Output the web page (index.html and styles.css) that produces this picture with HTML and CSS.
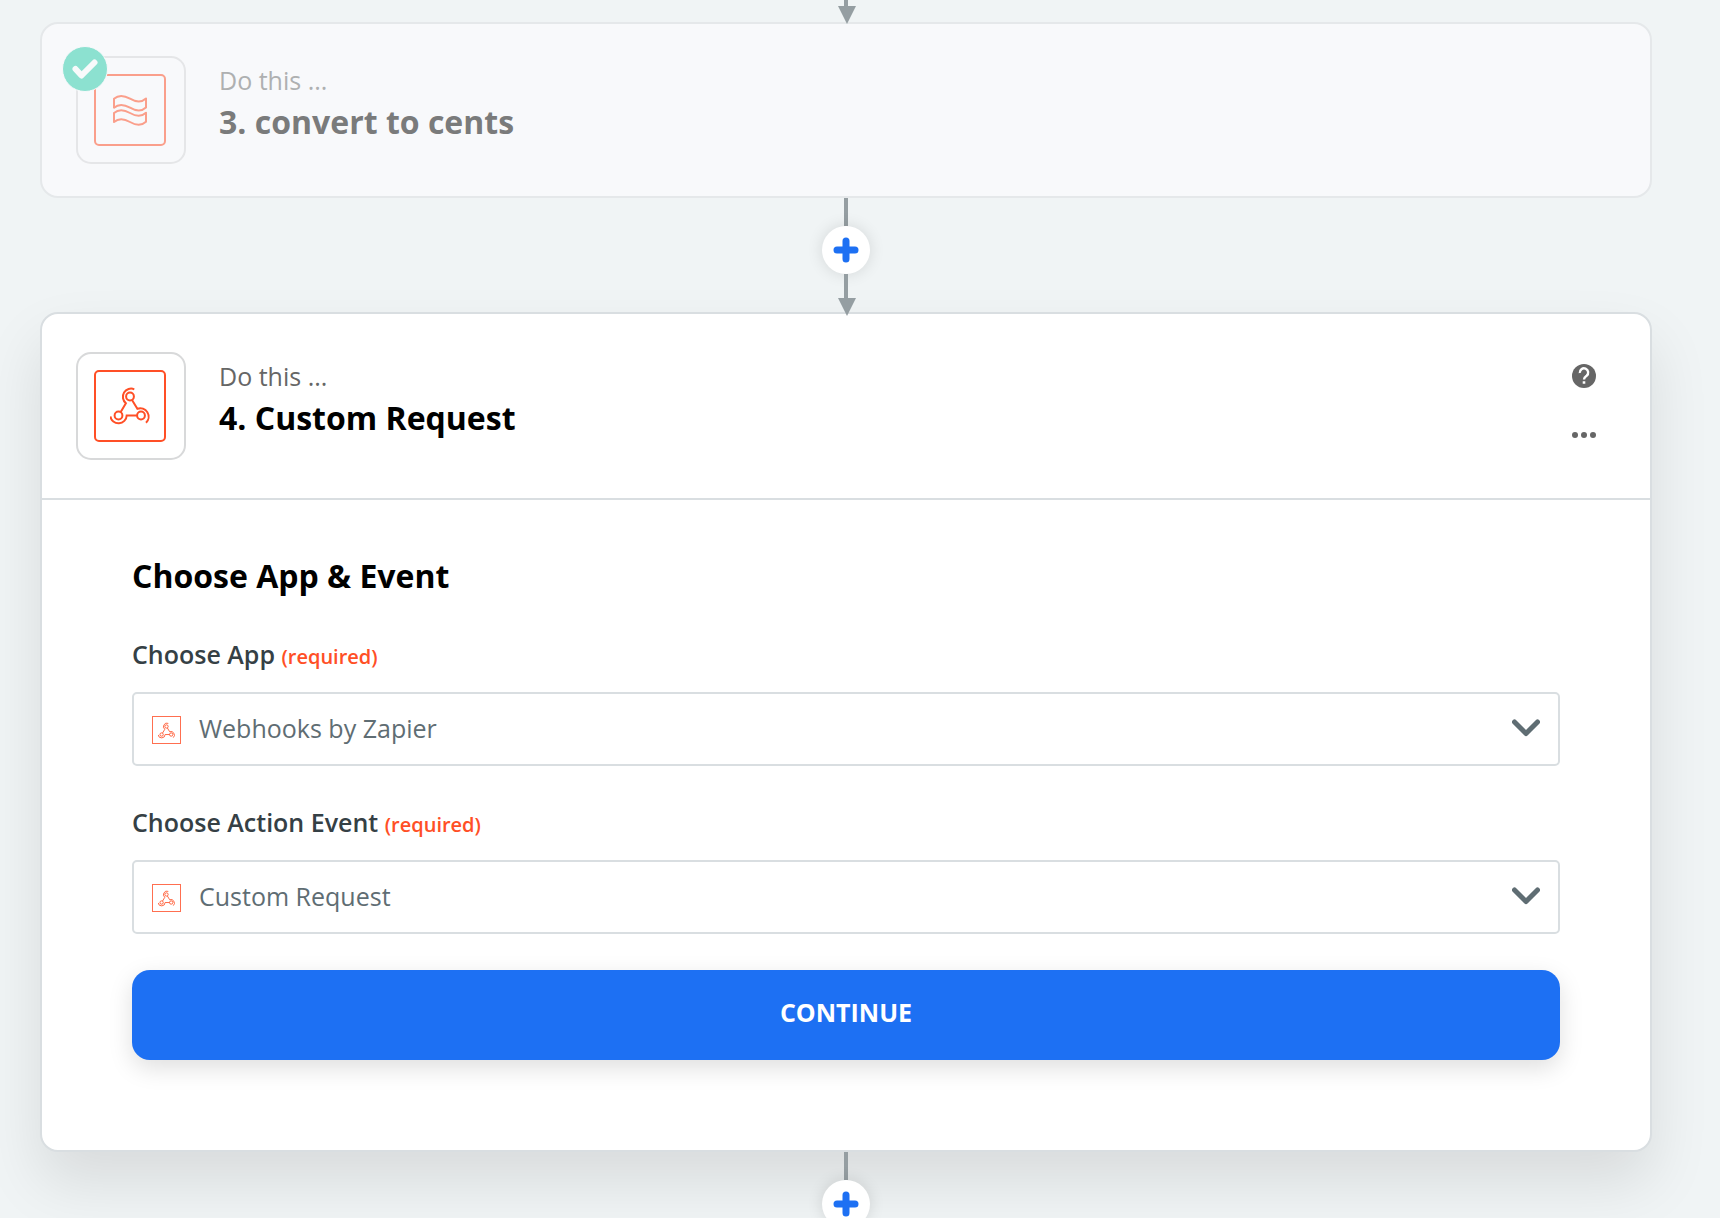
FILE: index.html
```html
<!DOCTYPE html>
<html lang="en">
<head>
<meta charset="utf-8">
<title>Zap editor</title>
<link rel="stylesheet" href="styles.css">
</head>
<body>
<svg class="defs" aria-hidden="true">
  <symbol id="hook" viewBox="0 0 40 40">
    <g fill="none" stroke="currentColor" stroke-width="2">
      <circle cx="20" cy="10.5" r="3.9"/>
      <circle cx="8.5" cy="29.5" r="3.9"/>
      <circle cx="31" cy="29.5" r="3.9"/>
      <path d="M24.3 3.3A8.2 8.2 0 0 0 15.9 17.2L10.7 26"/>
      <path d="M22 14L27.4 22.8A8.4 8.4 0 0 1 36 36.8"/>
      <path d="M.4 30.4A8.2 8.2 0 0 0 16.7 29.5H27"/>
    </g>
  </symbol>
</svg>
<main class="editor">
  <div class="flow">
    <svg class="arrow arrow-top" width="20" height="24" viewBox="0 0 20 24" aria-hidden="true"><path d="M8 0h4v6h8l-9 18L2 6h6z"/></svg>

    <section class="card done">
      <header class="card-head">
        <div class="app-box">
          <div class="app-icon">
            <svg width="40" height="40" viewBox="0 0 40 40" fill="none" stroke="currentColor" stroke-width="2" stroke-linejoin="round" aria-hidden="true">
              <path d="M4 8.700c4-3.500 10-3.500 16 0s12 3.500 16-.200v9c-4 3.700-10 3.700-16 .200s-12-3.500-16 0z"/>
              <path d="M4 23c4-3.500 10-3.500 16 0s12 3.500 16-.200v9c-4 3.700-10 3.700-16 .200s-12-3.500-16 0z"/>
            </svg>
          </div>
          <span class="badge">
            <svg width="26" height="20" viewBox="0 0 26 20" fill="none" stroke="currentColor" stroke-width="6" stroke-linecap="round" stroke-linejoin="round" aria-hidden="true"><path d="M3.500 10l6 6.500L22.500 3.500"/></svg>
          </span>
        </div>
        <div class="titles">
          <p class="kicker">Do this ...</p>
          <h2 class="title">3. convert to cents</h2>
        </div>
      </header>
    </section>

    <div class="connector">
      <span class="line"></span>
      <button class="add" type="button" aria-label="Add step"><svg width="26" height="26" viewBox="0 0 26 26" aria-hidden="true"><path d="M13 4v18M4 13h18"/></svg></button>
      <svg class="arrow" width="20" height="42" viewBox="0 0 20 42" aria-hidden="true"><path d="M8 0h4v24h8l-9 18L2 24h6z"/></svg>
    </div>

    <section class="card active">
      <header class="card-head">
        <div class="app-box">
          <div class="app-icon"><svg width="40" height="40" aria-hidden="true"><use href="#hook"/></svg></div>
        </div>
        <div class="titles">
          <p class="kicker">Do this ...</p>
          <h2 class="title">4. Custom Request</h2>
        </div>
        <div class="tools">
          <button class="tool" type="button" aria-label="Help">
            <svg width="24" height="24" viewBox="0 0 24 24" aria-hidden="true"><circle cx="12" cy="12" r="12"/><path d="M7.800 9A4.200 4.200 0 1 1 14.600 11.800C12.900 13 12 13.500 12 15.600" fill="none" stroke="#fff" stroke-width="2.400"/><path d="M10.700 17.300h2.600v2.500h-2.600z" fill="#fff"/></svg>
          </button>
          <button class="tool" type="button" aria-label="More">
            <svg width="24" height="24" viewBox="0 0 24 24" aria-hidden="true"><circle cx="3" cy="12" r="3"/><circle cx="12" cy="12" r="3"/><circle cx="21" cy="12" r="3"/></svg>
          </button>
        </div>
      </header>
      <form class="card-body">
        <h3 class="title">Choose App &amp; Event</h3>
        <div class="field">
          <label for="app">Choose App <small>(required)</small></label>
          <div class="picker">
            <span class="mini"><svg width="17" height="17" aria-hidden="true"><use href="#hook"/></svg></span>
            <select id="app"><option>Webhooks by Zapier</option></select>
            <svg class="chevron" width="28" height="18" viewBox="0 0 28 18" aria-hidden="true"><path d="M2.500 3L14 14.500 25.500 3"/></svg>
          </div>
        </div>
        <div class="field">
          <label for="event">Choose Action Event <small>(required)</small></label>
          <div class="picker">
            <span class="mini"><svg width="17" height="17" aria-hidden="true"><use href="#hook"/></svg></span>
            <select id="event"><option>Custom Request</option></select>
            <svg class="chevron" width="28" height="18" viewBox="0 0 28 18" aria-hidden="true"><path d="M2.500 3L14 14.500 25.500 3"/></svg>
          </div>
        </div>
        <button class="continue" type="button">CONTINUE</button>
      </form>
    </section>

    <div class="connector">
      <span class="line"></span>
      <button class="add" type="button" aria-label="Add step"><svg width="26" height="26" viewBox="0 0 26 26" aria-hidden="true"><path d="M13 4v18M4 13h18"/></svg></button>
      <svg class="arrow" width="20" height="42" viewBox="0 0 20 42" aria-hidden="true"><path d="M8 0h4v24h8l-9 18L2 24h6z"/></svg>
    </div>
  </div>
</main>
</body>
</html>
```
FILE: styles.css
```css
* {
  box-sizing: border-box;
}

body {
  margin: 0;
  background: #f0f4f5;
  color: #000;
  font-family: "Open Sans", "Noto Sans", sans-serif;
  font-size: 25px;
  line-height: 36px;
}

button,
select {
  font: inherit;
  border: 0;
  cursor: pointer;
}

h2,
h3,
p {
  margin: 0;
}

.defs {
  position: absolute;
  width: 0;
  height: 0;
}

.editor {
  height: 100vh;
  overflow: hidden;
}

.flow {
  padding: 0 68px 0 40px;
}

/* Connectors between steps */
.connector {
  display: flex;
  flex-direction: column;
  align-items: center;
  position: relative;
  z-index: 1;
}

.line {
  width: 4px;
  height: 28px;
  background: #959ea2;
}

.arrow {
  display: block;
  margin-bottom: -4px;
  fill: #959ea2;
}

.arrow-top {
  position: relative;
  z-index: 1;
  margin: 0 auto -2px;
}

.add {
  display: grid;
  place-items: center;
  width: 48px;
  height: 48px;
  padding: 0;
  border-radius: 50%;
  background: #fff;
  box-shadow: 0 0 16px rgba(0, 0, 0, 0.12);
}

.add path {
  stroke: #1d70f3;
  stroke-width: 7;
  stroke-linecap: round;
}

/* Step cards */
.card {
  border: 2px solid #d9dee1;
  border-radius: 18px;
  background: #fff;
}

.card-head {
  display: flex;
  gap: 33px;
  padding: 38px 34px;
}

.app-box {
  position: relative;
  display: grid;
  align-items: center;
  width: 110px;
  height: 108px;
  padding-left: 16px;
  border: 2px solid #d8d9da;
  border-radius: 15px;
}

.app-icon {
  display: grid;
  place-items: center;
  width: 72px;
  height: 72px;
  border: 2px solid #ff4f26;
  border-radius: 5px;
  color: #ff4f26;
}

.titles {
  display: grid;
  align-content: start;
  gap: 2px;
  flex: 1;
  padding-top: 6px;
}

.kicker {
  color: #666;
}

.title {
  font-size: 32px;
  line-height: 44px;
  font-weight: 700;
}

.active {
  box-shadow: 0 30px 60px rgba(0, 0, 0, 0.1);
}

.done {
  border-color: #e5e8ea;
  background: #f8f9fb;
}

.done .card-head {
  padding: 32px 34px;
}

.done .app-box {
  border-color: #e5e6e8;
}

.done .app-icon {
  border-color: #fa9f8b;
  color: #fa9f8b;
}

.done .kicker {
  color: #aeb0b1;
}

.done .title {
  color: #7a7b7b;
}

.badge {
  position: absolute;
  top: -12px;
  left: -16px;
  display: grid;
  place-items: center;
  width: 46px;
  height: 46px;
  border: 1px solid #f8f9fb;
  border-radius: 50%;
  background: #8ce1d0;
  color: #f8fafb;
}

.tools {
  display: grid;
  align-content: start;
  gap: 35px;
  padding: 12px 20px 0 0;
}

.tool {
  display: block;
  width: 24px;
  height: 24px;
  padding: 0;
  background: none;
}

.tool svg {
  display: block;
  fill: #666;
}

/* Step form */
.card-body {
  padding: 54px 90px 90px;
  border-top: 2px solid #d9dee1;
}

.field {
  display: grid;
  gap: 20px;
  margin-top: 38px;
}

.field label {
  color: #354045;
  font-weight: 600;
}

.field small {
  color: #ff4f26;
  font-size: 20px;
  line-height: 20px;
}

.picker {
  position: relative;
}

.picker select {
  display: block;
  width: 100%;
  height: 74px;
  padding: 0 64px 2px 65px;
  border: 2px solid #d9dee1;
  border-radius: 5px;
  background: #fff;
  color: #5f6d73;
  appearance: none;
}

.mini {
  position: absolute;
  top: 24px;
  left: 20px;
  display: grid;
  place-items: center;
  width: 29px;
  height: 28px;
  border: 1px solid #ff6f50;
  color: #ff4f26;
  pointer-events: none;
}

.chevron {
  position: absolute;
  top: 27px;
  right: 20px;
  fill: none;
  stroke: #5f6d73;
  stroke-width: 5;
  stroke-linecap: round;
  stroke-linejoin: round;
  pointer-events: none;
}

.continue {
  display: block;
  width: 100%;
  height: 90px;
  margin-top: 36px;
  padding: 0 0 6px;
  border-radius: 18px;
  background: #1d70f3;
  box-shadow: 0 8px 24px rgba(0, 0, 0, 0.13);
  color: #fff;
  font-weight: 700;
}
```
